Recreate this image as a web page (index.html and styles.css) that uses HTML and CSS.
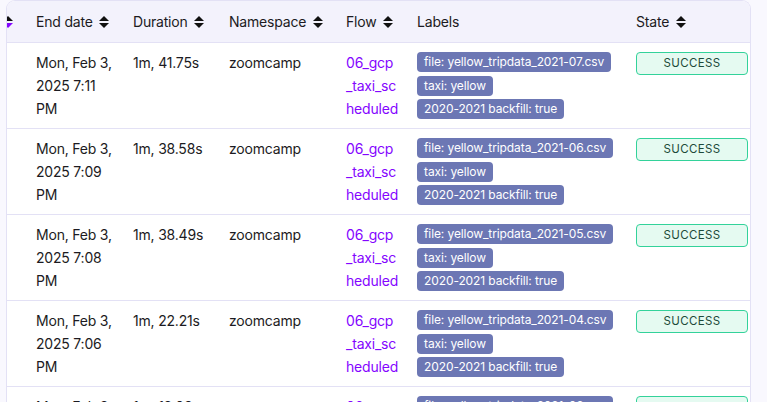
FILE: index.html
```html
<!DOCTYPE html>
<html>
<head>
<meta charset="utf-8">
<link rel="stylesheet" href="styles.css">
</head>
<body>
<div class="page">
  <div class="card">
    <table class="runs">
      <colgroup>
        <col class="c-first"><col class="c-end"><col class="c-dur"><col class="c-ns"><col class="c-flow"><col class="c-labels"><col class="c-state">
      </colgroup>
      <thead>
        <tr>
          <th class="first"><svg class="sort active" viewBox="0 0 10 12" width="10" height="12"><path d="M5 0 L10 5 L0 5 Z" fill="#111"/><path d="M0 7 L10 7 L5 12 Z" fill="#8405ff"/></svg></th>
          <th>End date <svg class="sort" viewBox="0 0 10 12" width="10" height="12"><path d="M5 0 L10 5 L0 5 Z"/><path d="M0 7 L10 7 L5 12 Z"/></svg></th>
          <th>Duration <svg class="sort" viewBox="0 0 10 12" width="10" height="12"><path d="M5 0 L10 5 L0 5 Z"/><path d="M0 7 L10 7 L5 12 Z"/></svg></th>
          <th>Namespace <svg class="sort" viewBox="0 0 10 12" width="10" height="12"><path d="M5 0 L10 5 L0 5 Z"/><path d="M0 7 L10 7 L5 12 Z"/></svg></th>
          <th>Flow <svg class="sort" viewBox="0 0 10 12" width="10" height="12"><path d="M5 0 L10 5 L0 5 Z"/><path d="M0 7 L10 7 L5 12 Z"/></svg></th>
          <th>Labels</th>
          <th>State <svg class="sort" viewBox="0 0 10 12" width="10" height="12"><path d="M5 0 L10 5 L0 5 Z"/><path d="M0 7 L10 7 L5 12 Z"/></svg></th>
        </tr>
      </thead>
      <tbody>
        <tr>
          <td class="first"></td>
          <td>Mon, Feb 3, 2025 7:11 PM</td>
          <td>1m, 41.75s</td>
          <td>zoomcamp</td>
          <td class="flow">06_gcp<wbr>_taxi_sc<wbr>heduled</td>
          <td><div class="labels"><span class="lbl">file: yellow_tripdata_2021-07.csv</span><span class="lbl">taxi: yellow</span><span class="lbl">2020-2021 backfill: true</span></div></td>
          <td><span class="state">SUCCESS</span></td>
        </tr>
        <tr>
          <td class="first"></td>
          <td>Mon, Feb 3, 2025 7:09 PM</td>
          <td>1m, 38.58s</td>
          <td>zoomcamp</td>
          <td class="flow">06_gcp<wbr>_taxi_sc<wbr>heduled</td>
          <td><div class="labels"><span class="lbl">file: yellow_tripdata_2021-06.csv</span><span class="lbl">taxi: yellow</span><span class="lbl">2020-2021 backfill: true</span></div></td>
          <td><span class="state">SUCCESS</span></td>
        </tr>
        <tr>
          <td class="first"></td>
          <td>Mon, Feb 3, 2025 7:08 PM</td>
          <td>1m, 38.49s</td>
          <td>zoomcamp</td>
          <td class="flow">06_gcp<wbr>_taxi_sc<wbr>heduled</td>
          <td><div class="labels"><span class="lbl">file: yellow_tripdata_2021-05.csv</span><span class="lbl">taxi: yellow</span><span class="lbl">2020-2021 backfill: true</span></div></td>
          <td><span class="state">SUCCESS</span></td>
        </tr>
        <tr>
          <td class="first"></td>
          <td>Mon, Feb 3, 2025 7:06 PM</td>
          <td>1m, 22.21s</td>
          <td>zoomcamp</td>
          <td class="flow">06_gcp<wbr>_taxi_sc<wbr>heduled</td>
          <td><div class="labels"><span class="lbl">file: yellow_tripdata_2021-04.csv</span><span class="lbl">taxi: yellow</span><span class="lbl">2020-2021 backfill: true</span></div></td>
          <td><span class="state">SUCCESS</span></td>
        </tr>
        <tr>
          <td class="first"></td>
          <td>Mon, Feb 3, 2025 7:05 PM</td>
          <td>1m, 18.03s</td>
          <td>zoomcamp</td>
          <td class="flow">06_gcp<wbr>_taxi_sc<wbr>heduled</td>
          <td><div class="labels"><span class="lbl">file: yellow_tripdata_2021-03.csv</span><span class="lbl">taxi: yellow</span><span class="lbl">2020-2021 backfill: true</span></div></td>
          <td><span class="state">SUCCESS</span></td>
        </tr>
      </tbody>
    </table>
  </div>
</div>
</body>
</html>
```

FILE: styles.css
```css
html, body {
  margin: 0;
  padding: 0;
  background: #f9f8fe;
  height: 402px;
  overflow: hidden;
}
body {
  font-family: "Inter", "Liberation Sans", sans-serif;
  color: #1c1b22;
  letter-spacing: -0.2px;
}
.page {
  padding-left: 6px;
}
.card {
  width: 745px;
  box-sizing: border-box;
  border: 1px solid #e3e1f5;
  border-bottom: none;
  border-radius: 9px 9px 0 0;
  background: #ffffff;
  overflow: hidden;
}
.runs {
  border-collapse: collapse;
  table-layout: fixed;
  width: 830px;
}
.c-first { width: 21px; }
.c-end { width: 97px; }
.c-dur { width: 96px; }
.c-ns { width: 117px; }
.c-flow { width: 71px; }
.c-labels { width: 219px; }
.c-state { width: 209px; }

.runs th {
  background: #f3f2fc;
  height: 41px;
  padding: 0 8px;
  text-align: left;
  font-weight: 400;
  font-size: 14px;
  white-space: nowrap;
  border-bottom: 1px solid #e3e1f5;
  vertical-align: middle;
}
.runs th.first {
  padding: 0;
  overflow: hidden;
}
.runs th.first .sort {
  margin-left: -4px;
}
.sort {
  vertical-align: -1px;
  margin-left: 3px;
  fill: #111;
}
.runs td {
  padding: 8px;
  font-size: 14px;
  line-height: 23px;
  vertical-align: top;
  border-bottom: 1px solid #e3e1f5;
}
.runs td.first { padding: 0; }
.runs td.flow {
  color: #8405ff;
  padding-right: 4px;
}
.labels {
  display: flex;
  flex-direction: column;
  align-items: flex-start;
  gap: 3.5px;
  padding-top: 1px;
}
.lbl {
  display: inline-block;
  background: #6c77b4;
  color: #ffffff;
  font-size: 12px;
  letter-spacing: -0.1px;
  line-height: 20px;
  height: 20px;
  padding: 0 7px;
  border-radius: 4px;
  white-space: nowrap;
}
.state {
  display: block;
  width: 112px;
  box-sizing: border-box;
  height: 23px;
  margin-top: 1px;
  line-height: 21px;
  text-align: center;
  font-size: 11.5px;
  letter-spacing: 0.4px;
  color: #1d4a3a;
  background: #e5faf1;
  border: 1px solid #33d29a;
  border-radius: 4px;
}
```
